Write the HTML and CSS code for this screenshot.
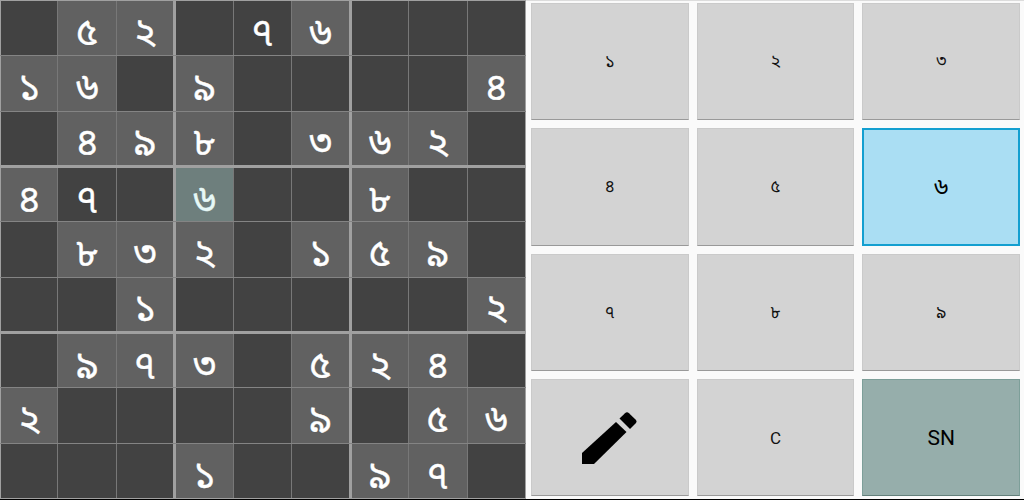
FILE: index.html
```
<!DOCTYPE html>
<html lang="bn">
<head>
<meta charset="utf-8">
<meta name="viewport" content="width=device-width, initial-scale=1">
<title>Sudoku</title>
<link rel="stylesheet" href="styles.css">
</head>
<body>
<main class="game">
  <section class="board" aria-label="Sudoku board">
    <div class="row"><button class="cell"></button><button class="cell given">৫</button><button class="cell given">২</button><button class="cell"></button><button class="cell">৭</button><button class="cell given">৬</button><button class="cell"></button><button class="cell"></button><button class="cell"></button></div>
    <div class="row"><button class="cell given">১</button><button class="cell given">৬</button><button class="cell"></button><button class="cell given">৯</button><button class="cell"></button><button class="cell"></button><button class="cell"></button><button class="cell"></button><button class="cell given">৪</button></div>
    <div class="row"><button class="cell"></button><button class="cell given">৪</button><button class="cell given">৯</button><button class="cell given">৮</button><button class="cell"></button><button class="cell given">৩</button><button class="cell given">৬</button><button class="cell given">২</button><button class="cell"></button></div>
    <div class="row"><button class="cell given">৪</button><button class="cell">৭</button><button class="cell"></button><button class="cell selected">৬</button><button class="cell"></button><button class="cell"></button><button class="cell given">৮</button><button class="cell"></button><button class="cell"></button></div>
    <div class="row"><button class="cell"></button><button class="cell given">৮</button><button class="cell given">৩</button><button class="cell given">২</button><button class="cell"></button><button class="cell given">১</button><button class="cell given">৫</button><button class="cell given">৯</button><button class="cell"></button></div>
    <div class="row"><button class="cell"></button><button class="cell"></button><button class="cell given">১</button><button class="cell"></button><button class="cell"></button><button class="cell"></button><button class="cell"></button><button class="cell"></button><button class="cell given">২</button></div>
    <div class="row"><button class="cell"></button><button class="cell given">৯</button><button class="cell given">৭</button><button class="cell given">৩</button><button class="cell"></button><button class="cell given">৫</button><button class="cell given">২</button><button class="cell given">৪</button><button class="cell"></button></div>
    <div class="row"><button class="cell given">২</button><button class="cell"></button><button class="cell"></button><button class="cell"></button><button class="cell"></button><button class="cell given">৯</button><button class="cell"></button><button class="cell given">৫</button><button class="cell given">৬</button></div>
    <div class="row"><button class="cell"></button><button class="cell"></button><button class="cell"></button><button class="cell given">১</button><button class="cell"></button><button class="cell"></button><button class="cell given">৯</button><button class="cell given">৭</button><button class="cell"></button></div>
  </section>
  <section class="keypad" aria-label="Keypad">
    <button class="key">১</button>
    <button class="key">২</button>
    <button class="key">৩</button>
    <button class="key">৪</button>
    <button class="key">৫</button>
    <button class="key active">৬</button>
    <button class="key">৭</button>
    <button class="key">৮</button>
    <button class="key">৯</button>
    <button class="key" aria-label="Pencil">
      <svg class="pencil" viewBox="0 0 55 52" aria-hidden="true">
        <path d="M0 41 L34 10 L44.500 20 L12 52 H0 Z"/>
        <path d="M37.500 6.500 L43 1.200 Q45 -0.600 47 1.200 L53.500 7.500 Q55.500 9.500 53.500 11.500 L48 17 Z"/>
      </svg>
    </button>
    <button class="key">C</button>
    <button class="key mode">SN</button>
  </section>
</main>
</body>
</html>
```
FILE: styles.css
```
* {
  box-sizing: border-box;
}

body {
  margin: 0;
  background: #fafafa;
  font-family: Roboto, "Noto Sans Bengali", "Noto Sans", sans-serif;
}

button {
  margin: 0;
  padding: 0;
  border: 0;
  border-radius: 0;
  font: inherit;
}

.game {
  display: grid;
  grid-template-columns: 526fr 498fr;
  height: 100vh;
  min-height: 360px;
  border-bottom: 1px solid #000;
}

.board {
  display: grid;
  grid-template-rows: repeat(9, minmax(0, 1fr));
  border-top: 1px solid #a0a0a0;
}

.row {
  display: grid;
  grid-template-columns: repeat(9, minmax(0, 1fr));
  border-bottom: 1px solid #848484;
}

.row:nth-child(3n) {
  border-bottom: 2px solid #a0a0a0;
}

.row:nth-child(3n + 4) {
  border-top: 1px solid #a0a0a0;
}

.row:last-child {
  border-bottom-width: 1px;
}

.cell {
  padding-top: 8px;
  border-right: 1px solid #787878;
  background: #424242;
  color: #fff;
  font-size: 38px;
  line-height: 40px;
  -webkit-text-stroke: 0.4px currentColor;
}

.cell:nth-child(3n) {
  border-right: 2px solid #a0a0a0;
}

.cell:nth-child(3n + 1) {
  border-left: 1px solid #a0a0a0;
}

.cell:last-child {
  border-right-width: 1px;
}

.given {
  background: #616161;
}

.selected {
  background: #6e7f7d;
  color: #e6f8f6;
}

.keypad {
  display: grid;
  grid-template-columns: repeat(3, minmax(0, 1fr));
  grid-template-rows: repeat(4, minmax(0, 1fr));
  gap: 8px;
  padding: 2px 4px 3px 5px;
  border-top: 1px solid #dcdcdc;
}

.key {
  display: flex;
  align-items: center;
  justify-content: center;
  padding-top: 2px;
  border: 1px solid #cacaca;
  border-bottom-color: #999;
  background: #d3d3d3;
  color: #111;
  font-size: 17px;
}

.active {
  padding-top: 4px;
  border: 2px solid #139fd0;
  background: #aadef3;
  color: #000;
  font-size: 24px;
}

.mode {
  border-color: #7d9f99;
  border-bottom-color: #627f7a;
  background: #96aeab;
  color: #000;
  font-size: 21px;
}

.pencil {
  width: 55px;
  height: 52px;
}
```
